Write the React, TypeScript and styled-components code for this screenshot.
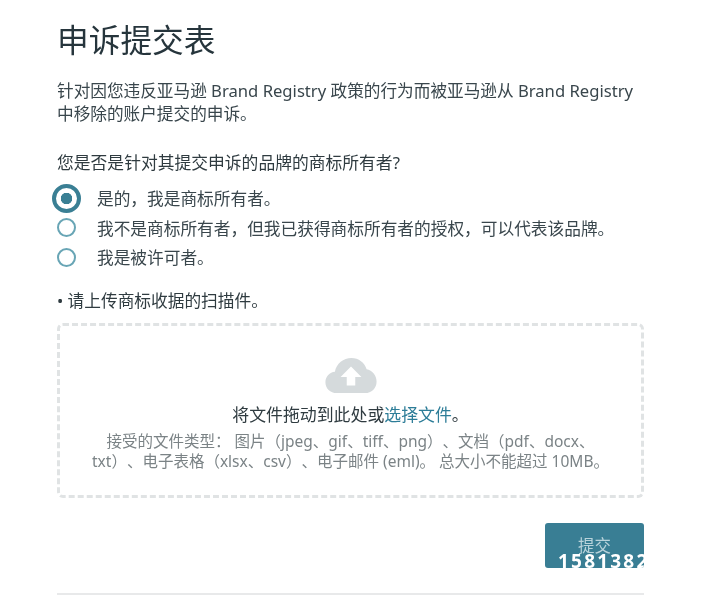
import styled, { createGlobalStyle } from "styled-components";

const GlobalStyle = createGlobalStyle`
  html, body {
    margin: 0;
    padding: 0;
    background: #fff;
  }
  body {
    font-family: "Noto Sans", "Noto Sans CJK SC", sans-serif;
    color: #2f3b40;
  }
`;

const Page = styled.main`
  width: 709px;
  height: 600px;
  box-sizing: border-box;
  padding: 17px 65px 0 57px;
  overflow: hidden;
  filter: blur(0.4px);
`;

const Title = styled.h1`
  margin: 0;
  font-size: 31.7px;
  line-height: 46px;
  font-weight: 400;
  color: #26353c;
`;

const Intro = styled.p`
  margin: 16px 0 0;
  font-size: 16.65px;
  line-height: 23px;
  white-space: nowrap;
  color: #39464c;
`;

const Question = styled.p`
  margin: 26px 0 0;
  font-size: 16.8px;
  line-height: 23px;
  color: #2f3b40;
`;

const Options = styled.div`
  display: flex;
  flex-direction: column;
  margin-top: 9.5px;
`;

const Option = styled.label`
  display: flex;
  align-items: center;
  height: 29.5px;
  font-size: 16.7px;
  color: #39464c;
`;

const RadioSlot = styled.span`
  display: flex;
  justify-content: center;
  align-items: center;
  width: 19px;
  margin-right: 21px;
`;

const Radio = styled.span<{ $checked?: boolean }>`
  box-sizing: border-box;
  flex: none;
  display: block;
  border-radius: 50%;
  width: ${(p) => (p.$checked ? "29px" : "19px")};
  height: ${(p) => (p.$checked ? "29px" : "19px")};
  border: 2px solid #68a5b5;
  background: #fff;
  ${(p) =>
    p.$checked &&
    `
    border: 4px solid #3a7f94;
    background: radial-gradient(circle, #3a7f94 0 5.5px, #fff 6px);
  `}
`;

const UploadLabel = styled.p`
  margin: 17px 0 0;
  font-size: 16.7px;
  line-height: 23px;
  color: #2f3b40;
`;

const DropZone = styled.div`
  box-sizing: border-box;
  height: 175px;
  margin-top: 11px;
  padding-top: 32px;
  border: 3px dashed #e0e3e4;
  border-radius: 6px;
  display: flex;
  flex-direction: column;
  align-items: center;
  text-align: center;
`;

const CloudIcon = styled.svg`
  width: 52px;
  height: 36px;
  display: block;
`;

const DropText = styled.div`
  margin-top: 9px;
  font-size: 16.9px;
  line-height: 23px;
  color: #2f3b40;
`;

const FileLink = styled.a`
  color: #2d7d98;
`;

const Hint = styled.div`
  margin-top: 5px;
  font-size: 15.5px;
  line-height: 20px;
  white-space: nowrap;
  text-spacing-trim: space-all;
  color: #7b8386;
`;

const Actions = styled.div`
  display: flex;
  justify-content: flex-end;
  margin-top: 25px;
`;

const SubmitButton = styled.button`
  position: relative;
  width: 99px;
  height: 45px;
  padding: 0 0 2px;
  border: 0;
  border-radius: 3px;
  overflow: hidden;
  background: #397e94;
  color: #b9d3db;
  font-family: inherit;
  font-size: 16.5px;
`;

const Watermark = styled.span`
  position: absolute;
  left: 13px;
  top: 26px;
  color: #fff;
  font-family: "Noto Sans", sans-serif;
  font-size: 19px;
  line-height: 24px;
  font-weight: 700;
  letter-spacing: 2.2px;
  white-space: nowrap;
`;

const Divider = styled.hr`
  margin: 25px 0 0;
  border: 0;
  border-top: 2px solid #e8e9ea;
`;

export default function App() {
  return (
    <Page>
      <GlobalStyle />
      <Title>申诉提交表</Title>
      <Intro>
        针对因您违反亚马逊 Brand Registry 政策的行为而被亚马逊从 Brand Registry
        <br />
        中移除的账户提交的申诉。
      </Intro>
      <Question>您是否是针对其提交申诉的品牌的商标所有者?</Question>
      <Options>
        <Option>
          <RadioSlot>
            <Radio $checked />
          </RadioSlot>
          是的，我是商标所有者。
        </Option>
        <Option>
          <RadioSlot>
            <Radio />
          </RadioSlot>
          我不是商标所有者，但我已获得商标所有者的授权，可以代表该品牌。
        </Option>
        <Option>
          <RadioSlot>
            <Radio />
          </RadioSlot>
          我是被许可者。
        </Option>
      </Options>
      <UploadLabel>• 请上传商标收据的扫描件。</UploadLabel>
      <DropZone>
        <CloudIcon viewBox="0 0 54 38">
          <path
            fill="#d5dadc"
            d="M12 37C5 37 0 32 0 25.500C0 19.500 4.500 15 10 14.500C11.500 6 19 0 27.500 0C35 0 41.500 5 43.500 12C49.500 13 54 18.500 54 25C54 32 48.500 37 42 37Z"
          />
          <path fill="#fff" d="M27 9L38 20H31.500V29H22.500V20H16Z" />
        </CloudIcon>
        <DropText>
          将文件拖动到此处或<FileLink>选择文件</FileLink>。
        </DropText>
        <Hint>
          接受的文件类型： 图片（jpeg、gif、tiff、png）、文档（pdf、docx、
          <br />
          txt）、电子表格（xlsx、csv）、电子邮件 (eml)。 总大小不能超过 10MB。
        </Hint>
      </DropZone>
      <Actions>
        <SubmitButton type="button">
          提交
          <Watermark>1581382</Watermark>
        </SubmitButton>
      </Actions>
      <Divider />
    </Page>
  );
}
